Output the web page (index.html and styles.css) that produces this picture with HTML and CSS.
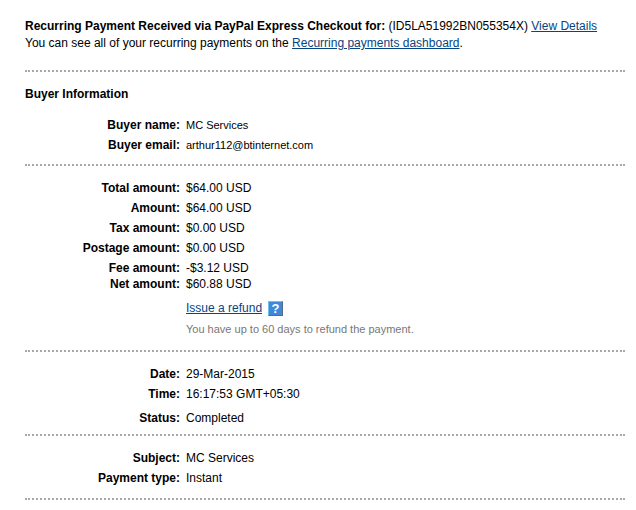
FILE: index.html
```
<!DOCTYPE html>
<html lang="en">
<head>
  <meta charset="utf-8">
  <meta name="viewport" content="width=device-width, initial-scale=1">
  <title>Transaction Details</title>
  <link rel="stylesheet" href="styles.css">
</head>
<body>
  <div class="intro">
    <p><strong>Recurring Payment Received via PayPal Express Checkout for:</strong> (ID5LA51992BN055354X) <a href="#details">View Details</a></p>
    <p>You can see all of your recurring payments on the <a href="#dashboard">Recurring payments dashboard</a>.</p>
  </div>

  <div class="section buyer">
    <h2>Buyer Information</h2>
    <table>
      <tr><th scope="row">Buyer name:</th><td>MC Services</td></tr>
      <tr><th scope="row">Buyer email:</th><td>arthur112@btinternet.com</td></tr>
    </table>
  </div>

  <div class="section amounts">
    <table>
      <tr><th scope="row">Total amount:</th><td>$64.00 USD</td></tr>
      <tr><th scope="row">Amount:</th><td>$64.00 USD</td></tr>
      <tr><th scope="row">Tax amount:</th><td>$0.00 USD</td></tr>
      <tr><th scope="row">Postage amount:</th><td>$0.00 USD</td></tr>
      <tr class="tight"><th scope="row">Fee amount:</th><td>-$3.12 USD</td></tr>
      <tr><th scope="row">Net amount:</th><td>$60.88 USD</td></tr>
    </table>
    <div class="refund">
      <a href="#refund">Issue a refund</a>
      <button type="button" class="help" aria-label="Help">?</button>
    </div>
    <p class="note">You have up to 60 days to refund the payment.</p>
  </div>

  <div class="section status">
    <table>
      <tr><th scope="row">Date:</th><td>29-Mar-2015</td></tr>
      <tr class="loose"><th scope="row">Time:</th><td>16:17:53 GMT+05:30</td></tr>
      <tr><th scope="row">Status:</th><td>Completed</td></tr>
    </table>
  </div>

  <div class="section subject">
    <table>
      <tr><th scope="row">Subject:</th><td>MC Services</td></tr>
      <tr><th scope="row">Payment type:</th><td>Instant</td></tr>
    </table>
  </div>
</body>
</html>
```
FILE: styles.css
```
body {
  margin: 0;
  padding: 18px 11px 0 25px;
  background: #fff;
  color: #000;
  font-family: "Liberation Sans", Arial, sans-serif;
  font-size: 12px;
  line-height: 16px;
}
p, h2 {margin: 0;}
a {color: #084482;}
.intro {
  padding-bottom: 18px;
  line-height: 17px;
}
.section {border-top: 2px dotted #a8a8a8;}
.section:last-child {border-bottom: 2px dotted #a8a8a8;}
h2 {
  padding: 14px 0 15px;
  font-size: 12px;
}

/* label / value rows */
table {
  width: 100%;
  border-collapse: collapse;
}
th, td {
  padding: 0 0 4px;
  text-align: left;
  vertical-align: top;
}
th {
  width: 155px;
  padding-right: 6px;
  text-align: right;
}
.tight th, .tight td {padding-bottom: 0;}
.loose th, .loose td {padding-bottom: 8px;}

.buyer {padding-bottom: 7px;}
.buyer td {font-size: 11px;}
.amounts {padding: 14px 0 13px;}
.status {padding: 14px 0 4px;}
.subject {padding: 14px 0 8px;}

/* refund link and help button */
.refund {
  display: flex;
  align-items: center;
  gap: 6px;
  padding: 4px 0 5px 161px;
}
.help {
  width: 15px;
  height: 15px;
  padding: 0;
  border: 1px solid;
  border-color: #6cc0f4 #5a6a80 #5a6a80 #6cc0f4;
  background: #4088d8;
  color: #fff;
  font: bold 13px/13px "Liberation Sans", Arial, sans-serif;
}
.note {
  padding-left: 161px;
  color: #777;
  font-size: 11px;
}
```
